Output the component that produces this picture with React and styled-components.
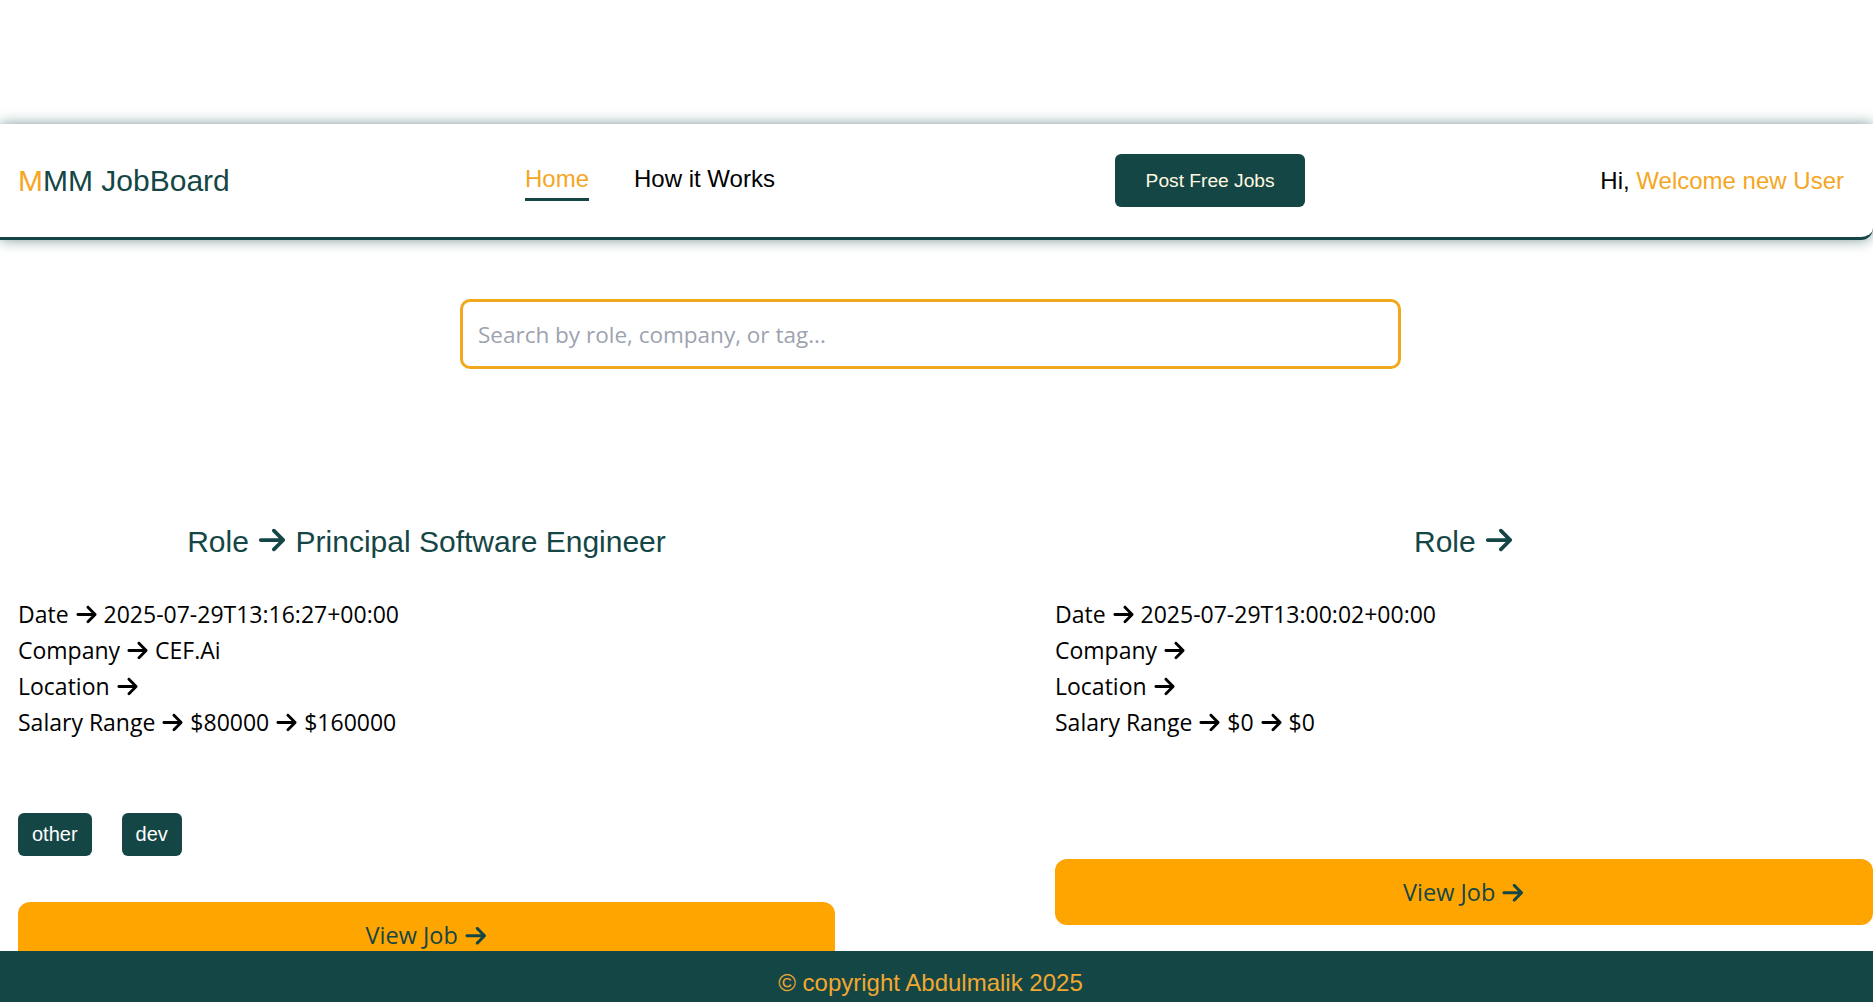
import React from "react";
import styled, { createGlobalStyle } from "styled-components";
import { FaArrowRight } from "react-icons/fa6";

const TEAL = "#154646";
const ORANGE = "#f5a623";
const BTN_ORANGE = "#ffa500";

const GlobalStyle = createGlobalStyle`
  html, body {
    margin: 0;
    padding: 0;
    background: #ffffff;
    overflow-x: hidden;
  }
  body {
    font-family: "Liberation Sans", Arial, sans-serif;
  }
  * { box-sizing: border-box; }
`;

const Page = styled.div`
  padding-bottom: 80px;
`;

const Header = styled.header`
  margin-top: 124px;
  height: 116px;
  display: flex;
  align-items: center;
  justify-content: space-between;
  padding: 0 29px 0 18px;
  background: #ffffff;
  border-bottom: 3px solid ${TEAL};
  border-radius: 0 0 12px 0;
  box-shadow: 0 0 14px rgba(21, 70, 70, 0.55);
`;

const Logo = styled.div`
  font-family: "Liberation Sans", Arial, sans-serif;
  font-size: 30px;
  color: ${TEAL};
  span { color: ${ORANGE}; }
`;

const Nav = styled.nav`
  display: flex;
  align-items: center;
  margin-top: 5px;
`;

const NavLink = styled.a`
  font-size: 24px;
  margin-right: 45px;
  padding-bottom: 5px;
  border-bottom: 3px solid ${(p) => (p.$active ? TEAL : "transparent")};
  color: ${(p) => (p.$active ? ORANGE : "#000000")};
  text-decoration: none;
  cursor: pointer;
`;

const PostButton = styled.button`
  font-family: "Liberation Sans", Arial, sans-serif;
  font-size: 19.2px;
  color: #fefae0;
  background: ${TEAL};
  border: none;
  border-radius: 6px;
  padding: 15px 30px;
  width: 190px;
  height: 53px;
  cursor: pointer;
`;

const Greeting = styled.div`
  font-size: 24px;
  color: #000000;
  span { color: ${ORANGE}; }
`;

const SearchSection = styled.section`
  display: flex;
  justify-content: center;
  padding-right: 12px;
  margin-top: 59px;
`;

const SearchInput = styled.input`
  width: 941px;
  height: 70px;
  border: 3px solid #f0a81e;
  border-radius: 10px;
  padding: 0 15px;
  font-family: "Open Sans", "Noto Sans", sans-serif;
  font-size: 22.5px;
  color: #222;
  outline: none;
  &::placeholder { color: #9ca3af; }
`;

const Grid = styled.main`
  display: grid;
  grid-template-columns: 817px 818px;
  column-gap: 220px;
  padding-left: 18px;
  margin-top: 156px;
  align-items: start;
`;

const Card = styled.article`
  display: flex;
  flex-direction: column;
`;

const Title = styled.h2`
  margin: 0;
  text-align: center;
  font-family: "Liberation Sans", Arial, sans-serif;
  font-weight: normal;
  font-size: 30px;
  line-height: 34px;
  color: ${TEAL};
  svg { vertical-align: -3px; }
`;

const Details = styled.div`
  margin-top: 37px;
  font-family: "Open Sans", "Noto Sans", sans-serif;
  font-size: 23px;
  line-height: 36px;
  color: #000000;
`;

const DetailLine = styled.div`
  svg { vertical-align: -3px; }
`;

const Tags = styled.div`
  display: flex;
  gap: 30px;
  margin-top: 73px;
`;

const Tag = styled.span`
  font-family: "Liberation Sans", Arial, sans-serif;
  font-size: 20px;
  line-height: 23px;
  color: #ffffff;
  background: ${TEAL};
  border-radius: 6px;
  padding: 10px 14px;
`;

const ViewButton = styled.button`
  margin-top: 46px;
  height: 66px;
  width: 100%;
  border: none;
  border-radius: 12px;
  background: ${BTN_ORANGE};
  color: ${TEAL};
  font-family: "Open Sans", "Noto Sans", sans-serif;
  font-size: 23.5px;
  cursor: pointer;
  svg { vertical-align: -3px; }
`;

const Footer = styled.footer`
  position: fixed;
  left: 0;
  right: 0;
  bottom: 0;
  height: 51px;
  background: ${TEAL};
  padding: 18px 12px 0 0;
  text-align: center;
  font-family: "Liberation Sans", Arial, sans-serif;
  font-size: 24px;
  line-height: 28px;
  color: #f0a830;
`;

const Arrow = () => <FaArrowRight />;

const jobs = [
  {
    role: "Principal Software Engineer",
    date: "2025-07-29T13:16:27+00:00",
    company: "CEF.Ai",
    location: "",
    min: "$80000",
    max: "$160000",
    tags: ["other", "dev"],
  },
  {
    role: "",
    date: "2025-07-29T13:00:02+00:00",
    company: "",
    location: "",
    min: "$0",
    max: "$0",
    tags: [],
  },
];

export default function App() {
  return (
    <Page>
      <GlobalStyle />
      <Header>
        <Logo>
          <span>M</span>MM JobBoard
        </Logo>
        <Nav>
          <NavLink $active>Home</NavLink>
          <NavLink>How it Works</NavLink>
        </Nav>
        <PostButton>Post Free Jobs</PostButton>
        <Greeting>
          Hi, <span>Welcome new User</span>
        </Greeting>
      </Header>

      <SearchSection>
        <SearchInput placeholder="Search by role, company, or tag..." />
      </SearchSection>

      <Grid>
        {jobs.map((job, i) => (
          <Card key={i}>
            <Title>
              Role <Arrow /> {job.role}
            </Title>
            <Details>
              <DetailLine>
                Date <Arrow /> {job.date}
              </DetailLine>
              <DetailLine>
                Company <Arrow /> {job.company}
              </DetailLine>
              <DetailLine>
                Location <Arrow /> {job.location}
              </DetailLine>
              <DetailLine>
                Salary Range <Arrow /> {job.min} <Arrow /> {job.max}
              </DetailLine>
            </Details>
            <Tags>
              {job.tags.map((t) => (
                <Tag key={t}>{t}</Tag>
              ))}
            </Tags>
            <ViewButton>
              View Job <Arrow />
            </ViewButton>
          </Card>
        ))}
      </Grid>

      <Footer>© copyright Abdulmalik 2025</Footer>
    </Page>
  );
}
